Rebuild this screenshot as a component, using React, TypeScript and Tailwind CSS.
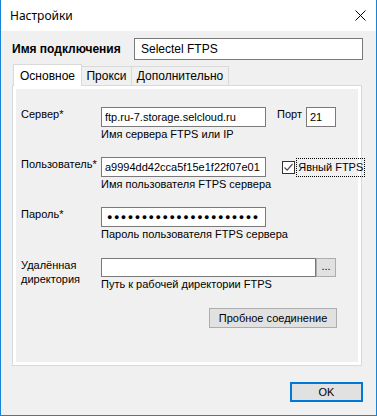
import React from "react";

const font = { fontFamily: '"Liberation Sans", Arial, sans-serif' };

function Field({ w, children }: { w: string; children?: React.ReactNode }) {
  return (
    <div
      className={`${w} h-[20px] shrink-0 border border-[#7a7a7a] bg-white flex items-center pl-[3px] leading-[14px] whitespace-nowrap overflow-hidden`}
    >
      {children}
    </div>
  );
}

function Hint({ children }: { children: React.ReactNode }) {
  return <div className="leading-[14px] whitespace-nowrap">{children}</div>;
}

export default function App() {
  return (
    <div
      className="w-[377px] h-[416px] flex flex-col bg-[#f0f0f0] border-l border-r border-b border-[#1883d7] text-[11px] text-black"
      style={font}
    >
      {/* title bar */}
      <div className="h-[31px] shrink-0 bg-white flex items-center justify-between pl-[9px] pr-[10px]">
        <span className="leading-[14px] text-[12px] font-['Noto_Sans',sans-serif]">Настройки</span>
        <svg width="11" height="11" viewBox="0 0 11 11">
          <path d="M0.5 0.5 L10.5 10.5 M10.5 0.5 L0.5 10.5" stroke="#000" strokeWidth="1" />
        </svg>
      </div>

      {/* connection name */}
      <div className="mt-[7px] flex items-center pl-[11px]">
        <span className="w-[122px] text-[12px] font-bold whitespace-nowrap">Имя подключения</span>
        <div className="w-[229px] h-[22px] border border-[#7a7a7a] bg-white flex items-center pl-[6px] text-[12px]">
          Selectel FTPS
        </div>
      </div>

      {/* tabs */}
      <div className="mt-[4px] h-[21px] flex items-end pl-[12px]">
        <div className="relative z-10 w-[69px] h-[22px] -mb-px border border-b-0 border-[#d9d9d9] bg-white flex items-center justify-center text-[12px]">
          Основное
        </div>
        <div className="w-[51px] h-[19px] -ml-px border border-b-0 border-[#d9d9d9] flex items-center justify-center text-[12px]">
          Прокси
        </div>
        <div className="w-[98px] h-[19px] -ml-px border border-b-0 border-[#d9d9d9] flex items-center justify-center text-[12px]">
          Дополнительно
        </div>
      </div>

      {/* tab page */}
      <div className="ml-[11px] w-[350px] h-[281px] border border-[#d9d9d9] bg-white p-[3px]">
        <div className="h-full bg-[#f0f0f0] pt-[18px] pl-[5px]">
          {/* server */}
          <div className="h-[50px] flex items-start">
            <div className="w-[80px] shrink-0 leading-[14px] whitespace-nowrap">Сервер*</div>
            <div className="flex flex-col">
              <Field w="w-[165px]">ftp.ru-7.storage.selcloud.ru</Field>
              <Hint>Имя сервера FTPS или IP</Hint>
            </div>
            <div className="ml-[11px] w-[29px] leading-[14px] whitespace-nowrap">Порт</div>
            <Field w="w-[30px]">21</Field>
          </div>

          {/* user */}
          <div className="h-[50px] flex items-start">
            <div className="w-[80px] shrink-0 leading-[14px] whitespace-nowrap">Пользователь*</div>
            <div className="flex flex-col">
              <Field w="w-[165px]">a9994dd42cca5f15e1f22f07e01</Field>
              <Hint>Имя пользователя FTPS сервера</Hint>
            </div>
            <div className="ml-[11px] mt-[4px] w-[13px] h-[13px] border border-[#333] bg-white flex items-center justify-center">
              <svg width="11" height="11" viewBox="0 0 11 11">
                <path d="M1.5 5.5 L4.2 8.2 L9.5 2" fill="none" stroke="#4d4d4d" strokeWidth="1.2" />
              </svg>
            </div>
            <div className="ml-[1px] mt-[1px] h-[19px] px-[1px] border border-dotted border-black flex items-center whitespace-nowrap">
              Явный FTPS
            </div>
          </div>

          {/* password */}
          <div className="h-[51px] flex items-start">
            <div className="w-[80px] shrink-0 leading-[14px] whitespace-nowrap">Пароль*</div>
            <div className="flex flex-col">
              <Field w="w-[165px]">
                <span className="text-[9px] tracking-[1.5px] pl-[2px]">
                  ●●●●●●●●●●●●●●●●●●●●●●
                </span>
              </Field>
              <Hint>Пароль пользователя FTPS сервера</Hint>
            </div>
          </div>

          {/* remote dir */}
          <div className="h-[50px] flex items-start">
            <div className="w-[80px] shrink-0 leading-[14px]">
              <div>Удалённая</div>
              <div>директория</div>
            </div>
            <div className="flex flex-col">
              <div className="flex">
                <div className="w-[215px] h-[19px] border border-[#7a7a7a] bg-white" />
                <div className="w-[20px] h-[19px] border border-[#adadad] bg-[#e1e1e1] flex items-center justify-center leading-[10px] pb-[4px]">
                  ...
                </div>
              </div>
              <Hint>Путь к рабочей директории FTPS</Hint>
            </div>
          </div>

          {/* test connection */}
          <div className="flex justify-end pr-[21px]">
            <div className="w-[128px] h-[20px] border border-[#adadad] bg-[#e1e1e1] flex items-center justify-center whitespace-nowrap">
              Пробное соединение
            </div>
          </div>
        </div>
      </div>

      {/* footer */}
      <div className="mt-[16px] flex justify-end pr-[13px]">
        <div className="w-[73px] h-[20px] border-2 border-[#0078d7] bg-[#e1e1e1] flex items-center justify-center">
          OK
        </div>
      </div>
    </div>
  );
}
